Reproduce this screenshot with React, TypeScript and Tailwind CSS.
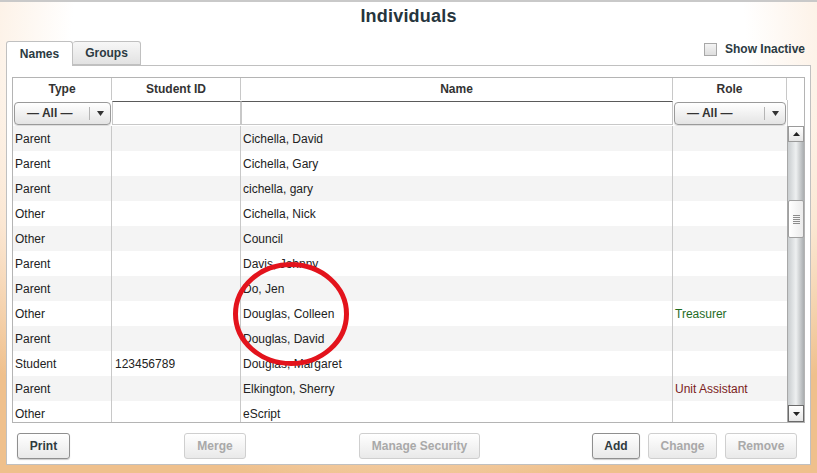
import React from 'react';

type Row = { type: string; sid: string; name: string; role?: string; roleColor?: string };

const rows: Row[] = [
  { type: 'Parent', sid: '', name: 'Cichella, David' },
  { type: 'Parent', sid: '', name: 'Cichella, Gary' },
  { type: 'Parent', sid: '', name: 'cichella, gary' },
  { type: 'Other', sid: '', name: 'Cichella, Nick' },
  { type: 'Other', sid: '', name: 'Council' },
  { type: 'Parent', sid: '', name: 'Davis, Johnny' },
  { type: 'Parent', sid: '', name: 'Do, Jen' },
  { type: 'Other', sid: '', name: 'Douglas, Colleen', role: 'Treasurer', roleColor: 'text-[#1f6b1f]' },
  { type: 'Parent', sid: '', name: 'Douglas, David' },
  { type: 'Student', sid: '123456789', name: 'Douglas, Margaret' },
  { type: 'Parent', sid: '', name: 'Elkington, Sherry', role: 'Unit Assistant', roleColor: 'text-[#7b1c1c]' },
  { type: 'Other', sid: '', name: 'eScript' },
];

function Select({ width }: { width: string }) {
  return (
    <div
      className={`${width} h-[23px] flex items-center rounded-[4px] border border-[#9a9a9a] bg-gradient-to-b from-white to-[#e4e4e4] shadow-[0_1px_1px_rgba(0,0,0,0.15)]`}
    >
      <span className="flex-1 pl-[12px] font-bold text-[12px] text-[#333]">— All —</span>
      <span className="w-px h-[13px] bg-[#b5b5b5]" />
      <span className="w-[20px] flex justify-center">
        <svg width="7" height="5" viewBox="0 0 7 5">
          <path d="M0 0h7L3.5 5z" fill="#333" />
        </svg>
      </span>
    </div>
  );
}

function Button({ label, disabled, width }: { label: string; disabled?: boolean; width: string }) {
  return (
    <div
      className={`${width} h-[26px] flex items-center justify-center rounded-[3px] border bg-gradient-to-b from-white to-[#e9e9e9] font-bold text-[12px] ${
        disabled ? 'border-[#cfcfcf] text-[#a9a9a9]' : 'border-[#8f8f8f] text-[#2f3b40] shadow-[0_1px_1px_rgba(0,0,0,0.2)]'
      }`}
    >
      {label}
    </div>
  );
}

export default function App() {
  return (
    <div
      className="w-[817px] h-[473px] overflow-hidden flex flex-col border-t-2 border-[#c9c9c9] bg-[radial-gradient(ellipse_75%_95%_at_50%_8%,#ffffff_55%,#fbe7d3_78%,#efc08c_100%)] text-[12px] text-[#222]"
      style={{ fontFamily: '"Liberation Sans", Arial, sans-serif' }}
    >
      <div className="h-[28px] shrink-0 flex items-center justify-center">
        <h1 className="text-[18px] leading-[22px] font-bold text-[#26353d] tracking-[0.2px]">Individuals</h1>
      </div>

      <div className="relative flex-1 flex flex-col px-[6px] pb-[8px] pt-[11px]">
        <div className="flex shrink-0 items-end h-[24px]">
          <div className="relative z-10 w-[67px] h-[25px] -mb-px flex items-center justify-center rounded-t-[3px] border border-b-0 border-[#c0c0c0] bg-white font-bold text-[12px] text-[#2b3a42]">
            Names
          </div>
          <div className="w-[68px] h-[24px] flex items-center justify-center rounded-t-[3px] border border-l-0 border-[#c0c0c0] bg-gradient-to-b from-[#f7f7f7] to-[#e2e2e2] font-bold text-[12px] text-[#2b3a42]">
            Groups
          </div>
          <div className="flex-1" />
          <div className="self-start -mt-[1px] mr-[6px] flex items-center gap-[8px]">
            <div className="w-[13px] h-[13px] border border-[#a8a8a8] bg-gradient-to-b from-[#f4f4f4] to-[#dedede]" />
            <span className="font-bold text-[12px] text-[#2b3a42]">Show Inactive</span>
          </div>
        </div>

        <div className="flex-1 flex flex-col border border-[#c0c0c0] bg-white px-[5px] pt-[11px]">
          <div className="w-[793px] shrink-0 border border-[#b4b4b4] flex flex-col">
            <div className="flex h-[22px] font-bold text-[12px] text-[#333]">
              <div className="w-[99px] flex items-center justify-center border-r border-[#c8c8c8]">Type</div>
              <div className="w-[129px] flex items-center justify-center border-r border-[#c8c8c8]">Student ID</div>
              <div className="w-[432px] flex items-center justify-center border-r border-[#c8c8c8]">Name</div>
              <div className="w-[114px] flex items-center justify-center border-r border-[#c8c8c8]">Role</div>
              <div className="flex-1" />
            </div>
            <div className="flex h-[26px] items-center">
              <div className="w-[99px] pl-px">
                <Select width="w-[97px]" />
              </div>
              <div className="w-[129px] h-[26px] pt-px">
                <div className="h-[24px] border border-[#c8c8c8] border-t-[#5a5a5a] bg-white" />
              </div>
              <div className="w-[432px] h-[26px] pt-px">
                <div className="h-[24px] border border-[#c8c8c8] border-t-[#5a5a5a] bg-white" />
              </div>
              <div className="w-[114px] pl-px">
                <Select width="w-[112px]" />
              </div>
              <div className="flex-1 h-full border-l border-[#c8c8c8]" />
            </div>

            <div className="flex h-[296px] overflow-hidden">
              <div className="w-[774px] flex flex-col">
                {rows.map((r, i) => (
                  <div
                    key={i}
                    className={`flex shrink-0 h-[25px] items-center text-[12px] text-[#222] ${i % 2 === 0 ? 'bg-[#f4f4f4]' : 'bg-white'}`}
                  >
                    <div className="w-[99px] h-full flex items-center pl-[2px] border-r border-[#c8c8c8]">{r.type}</div>
                    <div className="w-[129px] h-full flex items-center pl-[3px] border-r border-[#c8c8c8]">{r.sid}</div>
                    <div className="w-[432px] h-full flex items-center pl-[2px] border-r border-[#c8c8c8]">{r.name}</div>
                    <div className={`w-[114px] h-full flex items-center pl-[2px] ${r.roleColor ?? ''}`}>{r.role}</div>
                  </div>
                ))}
              </div>
              <div className="w-[17px] flex flex-col border-l border-[#a8a8a8] bg-gradient-to-r from-[#c9cdcf] via-[#eef0f1] to-[#a9adaf]">
                <div className="h-[16px] flex items-center justify-center border border-[#9a9a9a] bg-gradient-to-b from-white to-[#e6e6e6]">
                  <svg width="7" height="4" viewBox="0 0 7 4">
                    <path d="M0 4h7L3.5 0z" fill="#222" />
                  </svg>
                </div>
                <div className="h-[58px]" />
                <div className="h-[38px] flex items-center justify-center border border-[#a0a0a0] rounded-[2px] bg-gradient-to-r from-white to-[#ececec]">
                  <svg width="7" height="9" viewBox="0 0 7 9">
                    <path d="M0 .5h7M0 2.5h7M0 4.5h7M0 6.5h7M0 8.5h7" stroke="#8c8c8c" strokeWidth="1" />
                  </svg>
                </div>
                <div className="flex-1" />
                <div className="h-[17px] flex items-center justify-center border border-[#6a6a6a] bg-gradient-to-b from-white to-[#e6e6e6]">
                  <svg width="7" height="4" viewBox="0 0 7 4">
                    <path d="M0 0h7L3.5 4z" fill="#222" />
                  </svg>
                </div>
              </div>
            </div>
          </div>

          <div className="flex shrink-0 items-start h-[41px] pt-[10px] pl-[5px] pr-[8px]">
            <Button label="Print" width="w-[53px]" />
            <div className="w-[114px]" />
            <Button label="Merge" width="w-[62px]" disabled />
            <div className="w-[113px]" />
            <Button label="Manage Security" width="w-[121px]" disabled />
            <div className="flex-1" />
            <Button label="Add" width="w-[48px]" />
            <div className="w-[8px]" />
            <Button label="Change" width="w-[69px]" disabled />
            <div className="w-[8px]" />
            <Button label="Remove" width="w-[72px]" disabled />
          </div>
        </div>

        <svg
          className="absolute left-[231px] top-[230px] pointer-events-none"
          width="120"
          height="108"
          viewBox="0 0 120 108"
        >
          <ellipse cx="60" cy="54" rx="55.5" ry="49.5" fill="none" stroke="#e3131c" strokeWidth="5" />
        </svg>
      </div>
    </div>
  );
}
